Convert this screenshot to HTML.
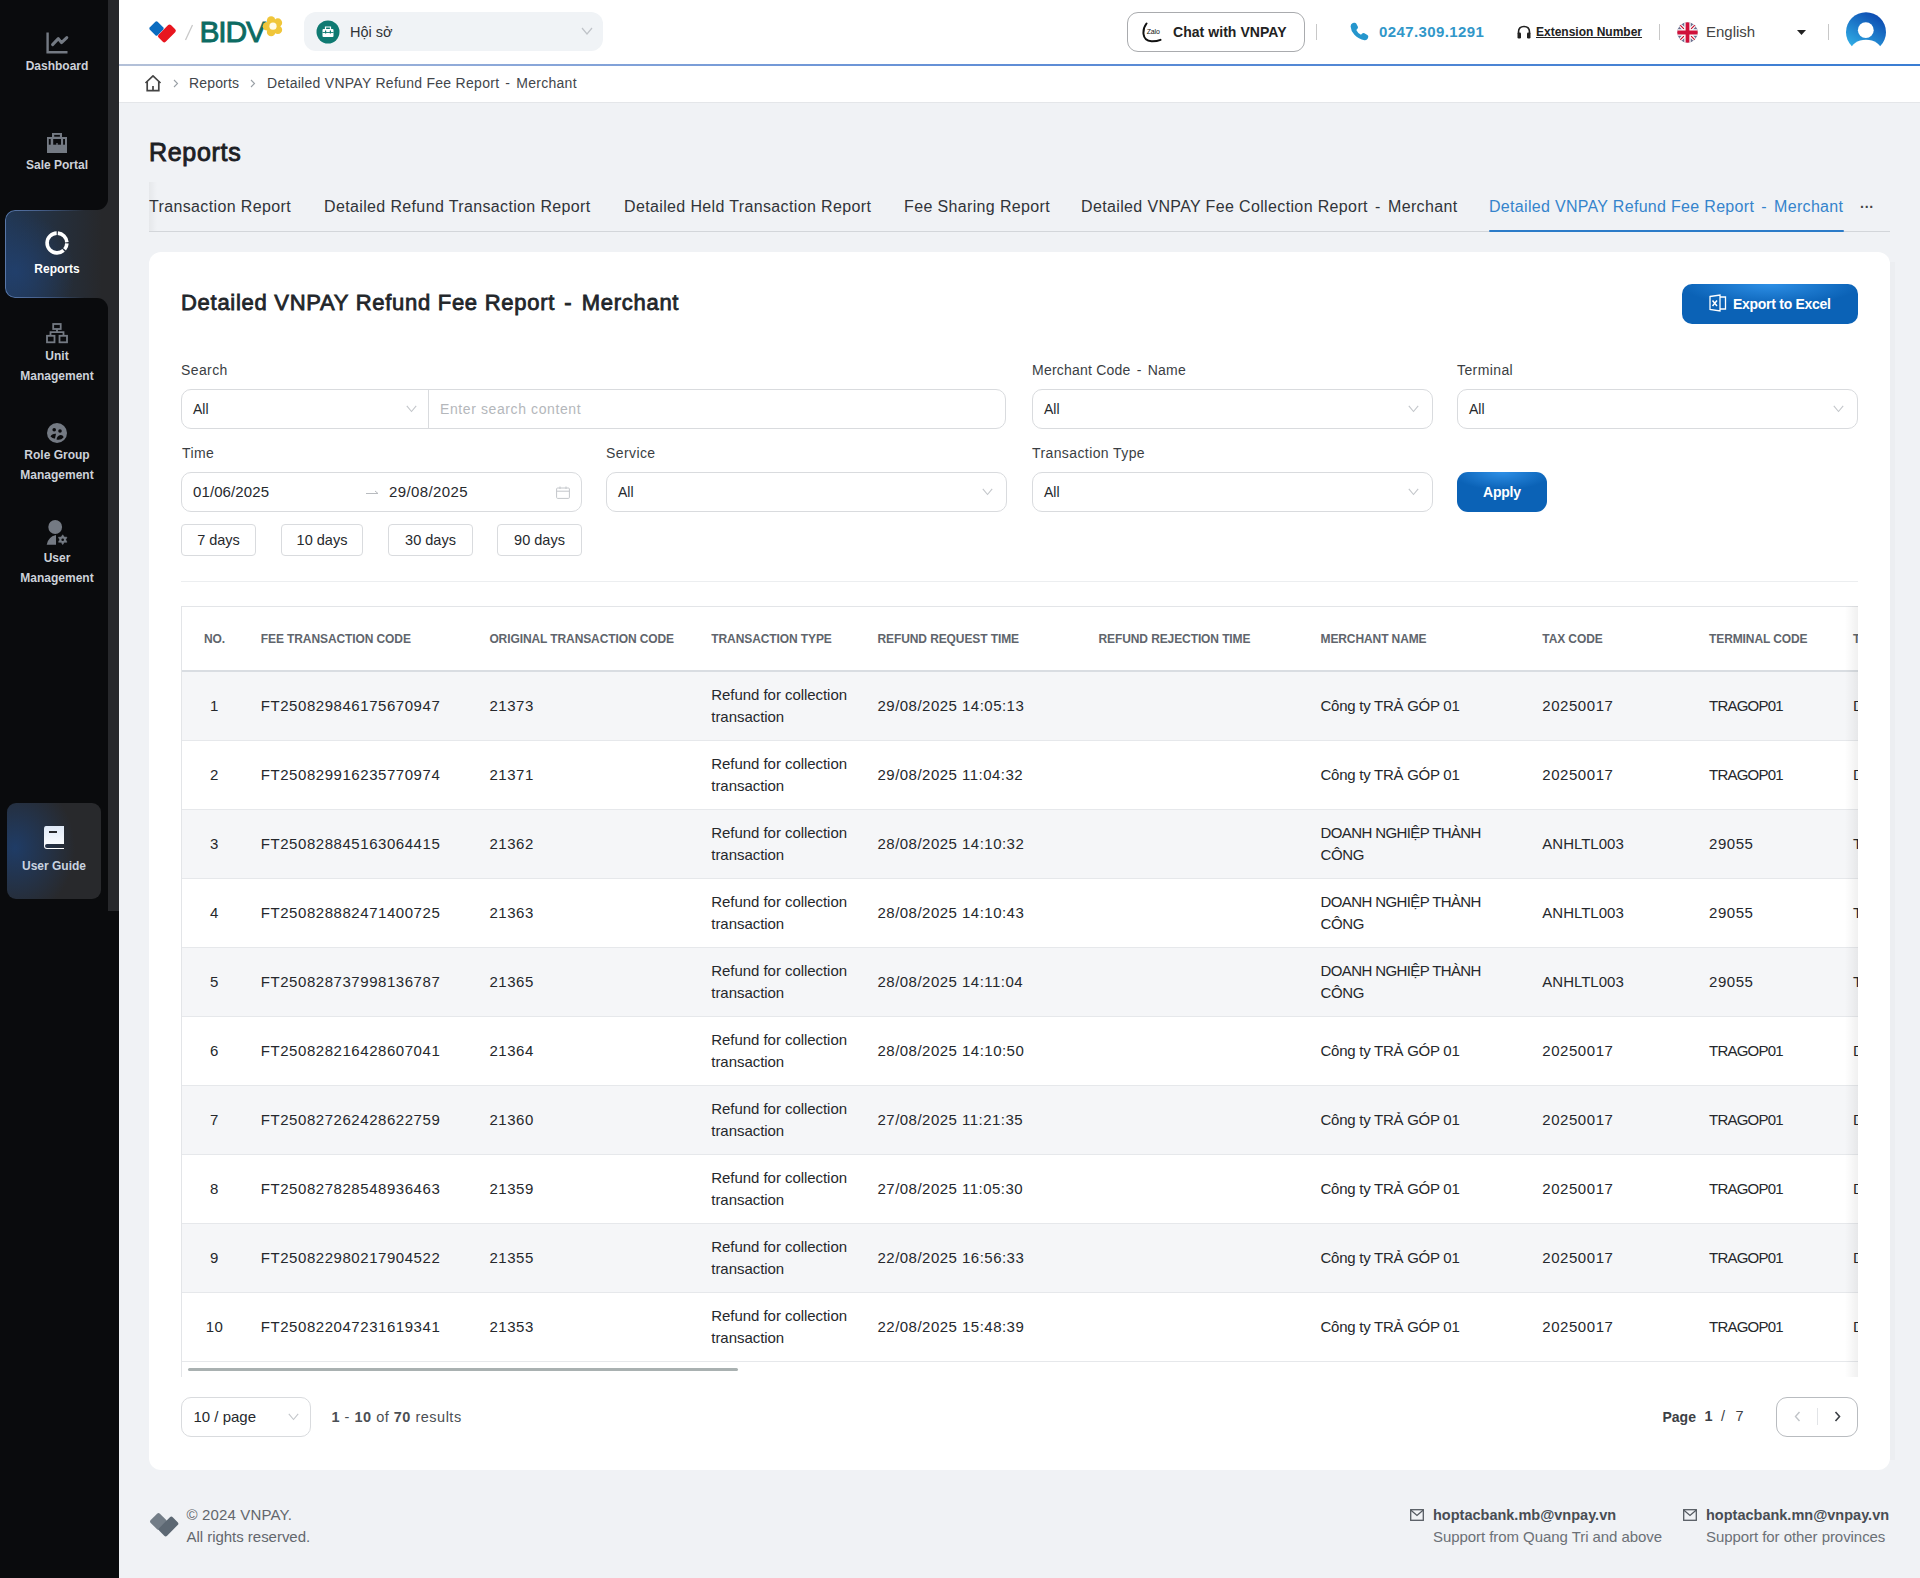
<!DOCTYPE html><html><head><meta charset="utf-8"><style>*{box-sizing:border-box;margin:0;padding:0}
html,body{width:1920px;height:1578px;overflow:hidden}
body{background:#f0f2f5;font-family:"Liberation Sans",sans-serif;color:#212529;position:relative}
.a{position:absolute;white-space:nowrap}
</style></head><body><div class="a" style="left:0px;top:0px;width:119px;height:1578px;background:#0a0b0d"></div>
<div class="a" style="left:0px;top:0px;width:119px;height:911px;background:#27282b"></div>
<div class="a" style="left:0px;top:0px;width:108px;height:210px;background:#0a0b0d;border-bottom-right-radius:11px"></div>
<div class="a" style="left:0px;top:200px;width:40px;height:110px;background:#0a0b0d"></div>
<div class="a" style="left:0px;top:298px;width:108px;height:613px;background:#0a0b0d;border-top-right-radius:11px"></div>
<div class="a" style="left:5px;top:210px;width:114px;height:88px;border-radius:10px 0 0 10px;background:radial-gradient(ellipse 60px 60px at 10px 62px,rgba(33,64,110,0.9) 0%,rgba(39,40,43,0) 100%),linear-gradient(90deg,#213754 0%,#252e3a 50%,#27282b 85%)"></div>
<div class="a" style="left:5px;top:210px;width:114px;height:88px;border-radius:10px 0 0 10px;padding:1px;background:linear-gradient(90deg,#5877a8 0%,#47608c 30%,rgba(39,40,43,0) 70%);-webkit-mask:linear-gradient(#000 0 0) content-box,linear-gradient(#000 0 0);-webkit-mask-composite:xor;mask-composite:exclude"></div>
<div class="a" style="left:7px;top:803px;width:94px;height:96px;border-radius:9px;background:radial-gradient(ellipse 60px 70px at 8px 45px,#1f3c66 0%,rgba(40,41,44,0) 100%),#28292c"></div>
<div class="a" style="left:0px;top:55.84px;font-size:12px;line-height:20px;color:#cdd1d9;font-weight:bold;width:114px;text-align:center;">Dashboard</div>
<div class="a" style="left:0px;top:154.84px;font-size:12px;line-height:20px;color:#cdd1d9;font-weight:bold;width:114px;text-align:center;">Sale Portal</div>
<div class="a" style="left:0px;top:258.84px;font-size:12px;line-height:20px;color:#ffffff;font-weight:bold;width:114px;text-align:center;">Reports</div>
<div class="a" style="left:0px;top:345.84px;font-size:12px;line-height:20px;color:#cdd1d9;font-weight:bold;width:114px;text-align:center;">Unit</div>
<div class="a" style="left:0px;top:365.84px;font-size:12px;line-height:20px;color:#cdd1d9;font-weight:bold;width:114px;text-align:center;">Management</div>
<div class="a" style="left:0px;top:444.84px;font-size:12px;line-height:20px;color:#cdd1d9;font-weight:bold;width:114px;text-align:center;">Role Group</div>
<div class="a" style="left:0px;top:464.84px;font-size:12px;line-height:20px;color:#cdd1d9;font-weight:bold;width:114px;text-align:center;">Management</div>
<div class="a" style="left:0px;top:547.84px;font-size:12px;line-height:20px;color:#cdd1d9;font-weight:bold;width:114px;text-align:center;">User</div>
<div class="a" style="left:0px;top:567.84px;font-size:12px;line-height:20px;color:#cdd1d9;font-weight:bold;width:114px;text-align:center;">Management</div>
<div class="a" style="left:7px;top:855.84px;font-size:12px;line-height:20px;color:#c9d3e0;font-weight:bold;width:94px;text-align:center;">User Guide</div>
<svg class="a" style="left:46px;top:32px;" width="23" height="23" viewBox="0 0 23 23"><path d="M1.6 0.4V20.3H21.5" stroke="#747a83" stroke-width="2.4" fill="none"/><path d="M6.6 12.6L12.3 6.6L15.5 10.6L20.8 5.6" stroke="#747a83" stroke-width="3" fill="none" stroke-linejoin="round" stroke-linecap="round"/></svg>
<svg class="a" style="left:47px;top:133px;" width="20" height="20" viewBox="0 0 20 20"><path d="M5 0H15V4.1H20V20H0V4.1H5Z" fill="#747a83"/><g fill="#0a0b0d"><rect x="7.2" y="1.9" width="5.7" height="1.8"/><rect x="1.8" y="6" width="1.9" height="5.7"/><rect x="6.2" y="6" width="7.8" height="5.7"/><rect x="16.1" y="6" width="1.9" height="5.7"/></g><rect x="9.2" y="10.2" width="1.6" height="1.6" fill="#747a83"/></svg>
<svg class="a" style="left:45px;top:231px;" width="24" height="24" viewBox="0 0 24 24"><circle cx="12" cy="12" r="9.9" stroke="#fff" stroke-width="3.6" fill="none" stroke-dasharray="6.57 1.38 37.7 1.21 13.8 1.56" transform="rotate(2 12 12)"/></svg>
<svg class="a" style="left:46px;top:323px;" width="22" height="21" viewBox="0 0 22 21"><rect x="7.2" y="1" width="7.5" height="5" stroke="#747a83" stroke-width="1.8" fill="none"/><path d="M11 6V9M4.5 12V9.2H17.5V12" stroke="#747a83" stroke-width="1.8" fill="none"/><rect x="1" y="12.8" width="7.5" height="6.5" stroke="#747a83" stroke-width="1.8" fill="none"/><rect x="13.5" y="12.8" width="7.5" height="6.5" stroke="#747a83" stroke-width="1.8" fill="none"/></svg>
<svg class="a" style="left:47px;top:423px;" width="20" height="20" viewBox="0 0 20 20"><circle cx="10" cy="10" r="10" fill="#747a83"/><circle cx="7.2" cy="6.7" r="1.8" fill="#0a0b0d"/><circle cx="13" cy="8" r="1.8" fill="#0a0b0d"/><path d="M3.5 13.5Q5 10.5 9 10.8L8 15.5Q6 16 3.5 13.5Z" fill="#0a0b0d"/><path d="M9.5 16.5Q10 12.5 13.5 12Q16.5 12.3 16.5 14.5Q14 17.5 9.5 16.5Z" fill="#0a0b0d"/></svg>
<svg class="a" style="left:46px;top:520px;" width="22" height="25" viewBox="0 0 22 25"><circle cx="9.2" cy="7" r="6.9" fill="#747a83"/><path d="M0.7 24.8Q1.8 17 10 15V24.8Z" fill="#747a83"/><polygon points="16.70,14.80 18.20,17.10 20.94,17.25 19.70,19.70 20.94,22.15 18.20,22.30 16.70,24.60 15.20,22.30 12.46,22.15 13.70,19.70 12.46,17.25 15.20,17.10" fill="#747a83" stroke="#747a83" stroke-width="0.6" stroke-linejoin="round"/><circle cx="16.7" cy="19.7" r="1.3" fill="#0a0b0d"/></svg>
<svg class="a" style="left:43px;top:825px;" width="22" height="24" viewBox="0 0 22 24"><defs><linearGradient id="bk" x1="0" y1="0" x2="0" y2="1"><stop offset="0" stop-color="#dfe9f7"/><stop offset="1" stop-color="#ffffff"/></linearGradient></defs><path d="M3 1H21V19H4Q2 19 2 21Q2 23 4 23H21V24H4Q1 24 1 21V4Q1 1 3 1Z" fill="url(#bk)"/><rect x="6" y="6" width="8" height="2" fill="#28292c"/></svg>
<div class="a" style="left:119px;top:0px;width:1801px;height:64px;background:#fff"></div>
<div class="a" style="left:119px;top:64px;width:1801px;height:2px;background:linear-gradient(90deg,#b4c1d8 0%,#8aa7d9 22%,#5f8dd6 50%,#3a7dd3 100%)"></div>
<div class="a" style="left:119px;top:66px;width:1801px;height:37px;background:#fff;border-bottom:1px solid #e4e6e9"></div>
<svg class="a" style="left:146px;top:18px;" width="34" height="27" viewBox="0 0 34 27"><rect x="5" y="5" width="11" height="11" rx="1.6" fill="#0b6cc0" transform="rotate(45 10.5 10.5)"/><rect x="12.15" y="10.4" width="17.5" height="10" rx="2" fill="#e8161f" transform="rotate(-45 20.9 15.4)"/></svg>
<svg class="a" style="left:184px;top:24px;" width="10" height="17" viewBox="0 0 10 17"><path d="M8.5 1L1.5 16" stroke="#c9c9c9" stroke-width="1.3"/></svg>
<div class="a" style="left:199.5px;top:16.61px;font-size:30px;line-height:30px;color:#0d6b63;letter-spacing:-1.2px;-webkit-text-stroke:0.9px #0d6b63">BIDV</div>
<svg class="a" style="left:262px;top:15px;" width="23" height="23" viewBox="0 0 23 23"><g fill="#f0c63a"><circle cx="5.00" cy="11.20" r="4.3"/><circle cx="9.15" cy="5.49" r="4.3"/><circle cx="15.85" cy="7.67" r="4.3"/><circle cx="15.85" cy="14.73" r="4.3"/><circle cx="9.15" cy="16.91" r="4.3"/></g><circle cx="11" cy="11.2" r="3.6" fill="#fffbe8"/></svg>
<div class="a" style="left:304px;top:12px;width:299px;height:39px;background:#f0f3f6;border-radius:12px"></div>
<svg class="a" style="left:316px;top:20px;" width="24" height="24" viewBox="0 0 24 24"><circle cx="12" cy="12" r="11.5" fill="#0f7a72"/><rect x="6.5" y="9" width="11" height="8" rx="1" fill="#fff"/><path d="M9.5 9V7H14.5V9" stroke="#fff" stroke-width="1.2" fill="none"/><path d="M6.5 12.5H17.5" stroke="#0f7a72" stroke-width="0.9"/><rect x="9" y="10.5" width="1.2" height="3" fill="#0f7a72"/><rect x="13.8" y="10.5" width="1.2" height="3" fill="#0f7a72"/></svg>
<div class="a" style="left:350px;top:21.98px;font-size:14.5px;line-height:20px;color:#303336;">Hội sở</div>
<svg class="a" style="left:581px;top:27px;" width="12" height="9" viewBox="0 0 12 9"><path d="M1 1L6 7L11 1" stroke="#bfc3c8" stroke-width="1.2" fill="none"/></svg>
<div class="a" style="left:1127px;top:12px;width:178px;height:40px;border:1px solid #a9abae;border-radius:11px;background:#fff"></div>
<svg class="a" style="left:1142px;top:22px;" width="22" height="21" viewBox="0 0 22 21"><path d="M4.5 1.5Q1 6 1.5 12Q2.3 18.8 9.5 19.3Q14.5 19.5 18.5 17.8" stroke="#111" stroke-width="2" fill="none" stroke-linecap="round"/><text x="4.8" y="11.8" font-family="Liberation Sans" font-size="7" fill="#111" letter-spacing="-0.2">Zalo</text></svg>
<div class="a" style="left:1173px;top:22.15px;font-size:14px;line-height:20px;color:#222;font-weight:bold;letter-spacing:0.05px;">Chat with VNPAY</div>
<div class="a" style="left:1316px;top:24px;width:1px;height:16px;background:#c8c8c8"></div>
<svg class="a" style="left:1350px;top:22px;" width="19" height="19" viewBox="0 0 19 19"><path d="M3.8 0.8Q5.5 0.3 6.2 1.6L7.8 4.6Q8.4 5.8 7.4 6.8L6.3 7.9Q7.6 10.9 11 12.7L12.2 11.6Q13.2 10.6 14.4 11.3L17.4 13Q18.7 13.8 18.2 15.3L17.6 16.8Q16.8 18.4 14.6 18.2Q8.5 17.2 4.4 12.8Q0.8 8.8 0.6 4.5Q0.6 2 2.4 1.3Z" fill="#2596cd"/></svg>
<div class="a" style="left:1379px;top:21.80px;font-size:15px;line-height:20px;color:#3197c9;font-weight:bold;letter-spacing:0.4px;">0247.309.1291</div>
<svg class="a" style="left:1517px;top:25px;" width="14" height="14" viewBox="0 0 14 14"><path d="M1.5 9V7Q1.5 1.5 7 1.5Q12.5 1.5 12.5 7V9" stroke="#222" stroke-width="1.6" fill="none"/><rect x="0.5" y="7.5" width="3.5" height="6" rx="1.2" fill="#222"/><rect x="10" y="7.5" width="3.5" height="6" rx="1.2" fill="#222"/></svg>
<div class="a" style="left:1536px;top:24.14px;font-size:12px;line-height:16px;color:#222;font-weight:bold;text-decoration:underline;text-underline-offset:1px">Extension Number</div>
<div class="a" style="left:1659px;top:24px;width:1px;height:16px;background:#c8c8c8"></div>
<svg class="a" style="left:1677px;top:22px;" width="21" height="21" viewBox="0 0 21 21"><defs><clipPath id="fc"><circle cx="10.5" cy="10.5" r="10.2"/></clipPath></defs><g clip-path="url(#fc)"><rect width="21" height="21" fill="#6d7190"/><path d="M0 0L21 21M21 0L0 21" stroke="#fff" stroke-width="3.4"/><path d="M0 0L21 21M21 0L0 21" stroke="#c8102e" stroke-width="1.2"/><path d="M10.5 0V21M0 10.5H21" stroke="#fff" stroke-width="6.4"/><path d="M10.5 0V21M0 10.5H21" stroke="#d0103a" stroke-width="3.8"/></g></svg>
<div class="a" style="left:1706px;top:21.80px;font-size:15px;line-height:20px;color:#444;">English</div>
<svg class="a" style="left:1797px;top:30px;" width="9" height="5" viewBox="0 0 9 5"><path d="M0 0H9L4.5 5Z" fill="#222"/></svg>
<div class="a" style="left:1828px;top:24px;width:1px;height:16px;background:#c8c8c8"></div>
<svg class="a" style="left:1846px;top:11px;" width="40" height="40" viewBox="0 0 40 40"><defs><linearGradient id="av" x1="0.8" y1="0" x2="0.2" y2="1"><stop offset="0" stop-color="#0a44ad"/><stop offset="1" stop-color="#33b6ea"/></linearGradient><mask id="am"><rect width="40" height="40" fill="#fff"/><circle cx="19.8" cy="19.2" r="7.9" fill="#000"/><ellipse cx="20" cy="39.7" rx="15.5" ry="11" fill="#000"/></mask></defs><circle cx="20" cy="21.2" r="20" fill="url(#av)" mask="url(#am)"/></svg>
<svg class="a" style="left:144px;top:74px;" width="18" height="18" viewBox="0 0 18 18"><path d="M1.5 9L9 1.8L16.5 9" stroke="#444" stroke-width="1.7" fill="none" stroke-linejoin="round"/><path d="M3.2 7.5V16.6H14.8V7.5" stroke="#444" stroke-width="1.7" fill="none"/><path d="M9 12V16.6" stroke="#444" stroke-width="1.7"/></svg>
<svg class="a" style="left:173px;top:79px;" width="6" height="9" viewBox="0 0 6 9"><path d="M1 1L4.5 4.5L1 8" stroke="#9aa0a6" stroke-width="1.1" fill="none"/></svg>
<div class="a" style="left:189px;top:74.15px;font-size:14px;line-height:18px;color:#42464b;letter-spacing:0.15px;">Reports</div>
<svg class="a" style="left:250px;top:79px;" width="6" height="9" viewBox="0 0 6 9"><path d="M1 1L4.5 4.5L1 8" stroke="#9aa0a6" stroke-width="1.1" fill="none"/></svg>
<div class="a" style="left:267px;top:74.15px;font-size:14px;line-height:18px;color:#42464b;letter-spacing:0.28px;">Detailed VNPAY Refund Fee Report <span style="margin:0 1.8px">-</span> Merchant</div>
<div class="a" style="left:149px;top:137.34px;font-size:25px;line-height:30px;color:#1c2024;letter-spacing:0.7px;-webkit-text-stroke:0.9px #1c2024">Reports</div>
<div class="a" style="left:149px;top:231px;width:1741px;height:1px;background:#d3d6da"></div>
<div class="a" style="left:149px;top:196.46px;font-size:16px;line-height:22px;color:#303439;letter-spacing:0.36px;">Transaction Report</div>
<div class="a" style="left:324px;top:196.46px;font-size:16px;line-height:22px;color:#303439;letter-spacing:0.36px;">Detailed Refund Transaction Report</div>
<div class="a" style="left:624px;top:196.46px;font-size:16px;line-height:22px;color:#303439;letter-spacing:0.36px;">Detailed Held Transaction Report</div>
<div class="a" style="left:904px;top:196.46px;font-size:16px;line-height:22px;color:#303439;letter-spacing:0.36px;">Fee Sharing Report</div>
<div class="a" style="left:1081px;top:196.46px;font-size:16px;line-height:22px;color:#303439;letter-spacing:0.36px;">Detailed VNPAY Fee Collection Report <span style="margin:0 2.4px">-</span> Merchant</div>
<div class="a" style="left:1489px;top:196.46px;font-size:16px;line-height:22px;color:#3584cc;letter-spacing:0.31px;">Detailed VNPAY Refund Fee Report <span style="margin:0 2.4px">-</span> Merchant</div>
<div class="a" style="left:1489px;top:230px;width:355px;height:2px;background:#2b7bc8;border-radius:1px"></div>
<div class="a" style="left:1860px;top:197.15px;font-size:14px;line-height:20px;color:#444;font-weight:bold;">···</div>
<div class="a" style="left:149px;top:182px;width:8px;height:49px;background:linear-gradient(90deg,rgba(0,0,0,0.045),rgba(0,0,0,0))"></div>
<div class="a" style="left:1890px;top:262px;width:5px;height:1198px;background:#eceef1"></div>
<div class="a" style="left:149px;top:252px;width:1741px;height:1218px;background:#fff;border-radius:12px"></div>
<div class="a" style="left:181px;top:289.38px;font-size:22px;line-height:28px;color:#22262a;letter-spacing:0.72px;-webkit-text-stroke:0.8px #22262a">Detailed VNPAY Refund Fee Report <span style="margin:0 2.5px">-</span> Merchant</div>
<div class="a" style="left:1682px;top:284px;width:176px;height:40px;border-radius:10px;background:radial-gradient(ellipse 90px 22px at 50% 0%,#2d8fe6 0%,rgba(13,100,186,0) 100%),#0b62b6"></div>
<svg class="a" style="left:1709px;top:294px;" width="18" height="18" viewBox="0 0 18 18"><path d="M1 2.5L11 1V17L1 15.5Z" stroke="#fff" stroke-width="1.3" fill="none"/><path d="M11 3H16.5V15H11" stroke="#fff" stroke-width="1.3" fill="none"/><path d="M3.5 6.5L8 12M8 6.5L3.5 12" stroke="#fff" stroke-width="1.5"/></svg>
<div class="a" style="left:1733px;top:294.15px;font-size:14px;line-height:20px;color:#fff;font-weight:bold;letter-spacing:-0.28px;">Export to Excel</div>
<div class="a" style="left:181px;top:361.15px;font-size:14px;line-height:18px;color:#3a3e43;letter-spacing:0.4px;">Search</div>
<div class="a" style="left:181px;top:389px;width:825px;height:40px;border:1px solid #d9dbde;border-radius:10px;background:#fff"></div>
<div class="a" style="left:428px;top:389px;width:1px;height:40px;background:#d9dbde"></div>
<div class="a" style="left:193px;top:400.15px;font-size:14px;line-height:18px;color:#26292d;">All</div>
<svg class="a" style="left:406px;top:405px;" width="11" height="8" viewBox="0 0 11 8"><path d="M0.8 0.8L5.5 6.5L10.2 0.8" stroke="#c3c6ca" stroke-width="1.1" fill="none"/></svg>
<div class="a" style="left:440px;top:400.15px;font-size:14px;line-height:18px;color:#b4b7bb;letter-spacing:0.6px;">Enter search content</div>
<div class="a" style="left:1032px;top:361.15px;font-size:14px;line-height:18px;color:#3a3e43;letter-spacing:0.22px;">Merchant Code <span style="margin:0 2px">-</span> Name</div>
<div class="a" style="left:1032px;top:389px;width:401px;height:40px;border:1px solid #d9dbde;border-radius:10px;background:#fff"></div>
<div class="a" style="left:1044px;top:400.15px;font-size:14px;line-height:18px;color:#26292d;">All</div>
<svg class="a" style="left:1408px;top:405px;" width="11" height="8" viewBox="0 0 11 8"><path d="M0.8 0.8L5.5 6.5L10.2 0.8" stroke="#c3c6ca" stroke-width="1.1" fill="none"/></svg>
<div class="a" style="left:1457px;top:361.15px;font-size:14px;line-height:18px;color:#3a3e43;letter-spacing:0.4px;">Terminal</div>
<div class="a" style="left:1457px;top:389px;width:401px;height:40px;border:1px solid #d9dbde;border-radius:10px;background:#fff"></div>
<div class="a" style="left:1469px;top:400.15px;font-size:14px;line-height:18px;color:#26292d;">All</div>
<svg class="a" style="left:1833px;top:405px;" width="11" height="8" viewBox="0 0 11 8"><path d="M0.8 0.8L5.5 6.5L10.2 0.8" stroke="#c3c6ca" stroke-width="1.1" fill="none"/></svg>
<div class="a" style="left:182px;top:444.15px;font-size:14px;line-height:18px;color:#3a3e43;letter-spacing:0.4px;">Time</div>
<div class="a" style="left:181px;top:472px;width:401px;height:40px;border:1px solid #d9dbde;border-radius:10px;background:#fff"></div>
<div class="a" style="left:193px;top:482.80px;font-size:15px;line-height:18px;color:#26292d;letter-spacing:0.1px;">01/06/2025</div>
<svg class="a" style="left:366px;top:489px;" width="13" height="7" viewBox="0 0 13 7"><path d="M0 4.5H12M9 2L12 4.5" stroke="#b8bbbf" stroke-width="1" fill="none"/></svg>
<div class="a" style="left:389px;top:482.80px;font-size:15px;line-height:18px;color:#26292d;letter-spacing:0.38px;">29/08/2025</div>
<svg class="a" style="left:556px;top:486px;" width="14" height="13" viewBox="0 0 14 13"><rect x="0.6" y="2" width="12.8" height="10.4" rx="1" stroke="#c3c6ca" stroke-width="1" fill="none"/><path d="M0.6 5.2H13.4M4 0.5V3M10 0.5V3" stroke="#c3c6ca" stroke-width="1"/></svg>
<div class="a" style="left:606px;top:444.15px;font-size:14px;line-height:18px;color:#3a3e43;letter-spacing:0.4px;">Service</div>
<div class="a" style="left:606px;top:472px;width:401px;height:40px;border:1px solid #d9dbde;border-radius:10px;background:#fff"></div>
<div class="a" style="left:618px;top:483.15px;font-size:14px;line-height:18px;color:#26292d;">All</div>
<svg class="a" style="left:982px;top:488px;" width="11" height="8" viewBox="0 0 11 8"><path d="M0.8 0.8L5.5 6.5L10.2 0.8" stroke="#c3c6ca" stroke-width="1.1" fill="none"/></svg>
<div class="a" style="left:1032px;top:444.15px;font-size:14px;line-height:18px;color:#3a3e43;letter-spacing:0.4px;">Transaction Type</div>
<div class="a" style="left:1032px;top:472px;width:401px;height:40px;border:1px solid #d9dbde;border-radius:10px;background:#fff"></div>
<div class="a" style="left:1044px;top:483.15px;font-size:14px;line-height:18px;color:#26292d;">All</div>
<svg class="a" style="left:1408px;top:488px;" width="11" height="8" viewBox="0 0 11 8"><path d="M0.8 0.8L5.5 6.5L10.2 0.8" stroke="#c3c6ca" stroke-width="1.1" fill="none"/></svg>
<div class="a" style="left:1457px;top:472px;width:90px;height:40px;border-radius:11px;background:radial-gradient(ellipse 50px 18px at 50% 0%,#2d8fe6 0%,rgba(13,100,186,0) 100%),#0b62b6"></div>
<div class="a" style="left:1483px;top:483.15px;font-size:14px;line-height:18px;color:#fff;font-weight:bold;letter-spacing:-0.2px;">Apply</div>
<div class="a" style="left:181px;top:524px;width:75px;height:32px;border:1px solid #d9dbde;border-radius:4px;background:#fff"></div>
<div class="a" style="left:181px;top:530.98px;font-size:14.5px;line-height:18px;color:#26292d;width:75px;text-align:center;">7 days</div>
<div class="a" style="left:281px;top:524px;width:82px;height:32px;border:1px solid #d9dbde;border-radius:4px;background:#fff"></div>
<div class="a" style="left:281px;top:530.98px;font-size:14.5px;line-height:18px;color:#26292d;width:82px;text-align:center;">10 days</div>
<div class="a" style="left:388px;top:524px;width:85px;height:32px;border:1px solid #d9dbde;border-radius:4px;background:#fff"></div>
<div class="a" style="left:388px;top:530.98px;font-size:14.5px;line-height:18px;color:#26292d;width:85px;text-align:center;">30 days</div>
<div class="a" style="left:497px;top:524px;width:85px;height:32px;border:1px solid #d9dbde;border-radius:4px;background:#fff"></div>
<div class="a" style="left:497px;top:530.98px;font-size:14.5px;line-height:18px;color:#26292d;width:85px;text-align:center;">90 days</div>
<div class="a" style="left:181px;top:581px;width:1677px;height:1px;background:#eceef0"></div>
<div class="a" style="left:181px;top:606px;width:1677px;height:771px;overflow:hidden">
<div class="a" style="left:0px;top:0px;width:1677px;height:1px;background:#e3e5e8"></div>
<div class="a" style="left:0px;top:0px;width:1px;height:771px;background:#e3e5e8"></div>
<div class="a" style="left:1px;top:64px;width:1676px;height:2px;background:#d9dde2"></div>
<div class="a" style="left:79.8px;top:25.14px;font-size:12px;line-height:16px;color:#60656c;font-weight:bold;letter-spacing:-0.1px;">FEE TRANSACTION CODE</div>
<div class="a" style="left:308.4px;top:25.14px;font-size:12px;line-height:16px;color:#60656c;font-weight:bold;letter-spacing:-0.1px;">ORIGINAL TRANSACTION CODE</div>
<div class="a" style="left:530.3px;top:25.14px;font-size:12px;line-height:16px;color:#60656c;font-weight:bold;letter-spacing:-0.1px;">TRANSACTION TYPE</div>
<div class="a" style="left:696.5px;top:25.14px;font-size:12px;line-height:16px;color:#60656c;font-weight:bold;letter-spacing:-0.1px;">REFUND REQUEST TIME</div>
<div class="a" style="left:917.5px;top:25.14px;font-size:12px;line-height:16px;color:#60656c;font-weight:bold;letter-spacing:-0.1px;">REFUND REJECTION TIME</div>
<div class="a" style="left:1139.5px;top:25.14px;font-size:12px;line-height:16px;color:#60656c;font-weight:bold;letter-spacing:-0.1px;">MERCHANT NAME</div>
<div class="a" style="left:1361.3px;top:25.14px;font-size:12px;line-height:16px;color:#60656c;font-weight:bold;letter-spacing:-0.1px;">TAX CODE</div>
<div class="a" style="left:1528px;top:25.14px;font-size:12px;line-height:16px;color:#60656c;font-weight:bold;letter-spacing:-0.1px;">TERMINAL CODE</div>
<div class="a" style="left:1672px;top:25.14px;font-size:12px;line-height:16px;color:#60656c;font-weight:bold;letter-spacing:-0.1px;">TERMINAL NAME</div>
<div class="a" style="left:0px;top:25.14px;font-size:12px;line-height:16px;color:#60656c;font-weight:bold;letter-spacing:-0.1px;width:67px;text-align:center;">NO.</div>
<div class="a" style="left:1px;top:66px;width:1676px;height:69px;background:#f5f6f8;border-bottom:1px solid #e6e8eb"></div>
<div class="a" style="left:0px;top:89.80px;font-size:15px;line-height:20px;color:#25282c;letter-spacing:0.5px;width:67px;text-align:center;">1</div>
<div class="a" style="left:79.80000000000001px;top:89.80px;font-size:15px;line-height:20px;color:#25282c;letter-spacing:0.55px;">FT250829846175670947</div>
<div class="a" style="left:308.4px;top:89.80px;font-size:15px;line-height:20px;color:#25282c;letter-spacing:0.55px;">21373</div>
<div class="a" style="left:530.3px;top:77.80px;font-size:15px;line-height:22px;color:#25282c;letter-spacing:-0.05px;">Refund for collection</div>
<div class="a" style="left:530.3px;top:99.80px;font-size:15px;line-height:22px;color:#25282c;letter-spacing:-0.05px;">transaction</div>
<div class="a" style="left:696.5px;top:89.80px;font-size:15px;line-height:20px;color:#25282c;letter-spacing:0.48px;">29/08/2025 14:05:13</div>
<div class="a" style="left:1139.5px;top:89.80px;font-size:15px;line-height:20px;color:#25282c;letter-spacing:-0.26px;">Công ty TRẢ GÓP 01</div>
<div class="a" style="left:1361.3px;top:89.80px;font-size:15px;line-height:20px;color:#25282c;letter-spacing:0.55px;">20250017</div>
<div class="a" style="left:1528px;top:89.80px;font-size:15px;line-height:20px;color:#25282c;letter-spacing:-0.78px;">TRAGOP01</div>
<div class="a" style="left:1672px;top:89.80px;font-size:15px;line-height:20px;color:#25282c;">DN</div>
<div class="a" style="left:1px;top:135px;width:1676px;height:69px;background:#fff;border-bottom:1px solid #e6e8eb"></div>
<div class="a" style="left:0px;top:158.80px;font-size:15px;line-height:20px;color:#25282c;letter-spacing:0.5px;width:67px;text-align:center;">2</div>
<div class="a" style="left:79.80000000000001px;top:158.80px;font-size:15px;line-height:20px;color:#25282c;letter-spacing:0.55px;">FT250829916235770974</div>
<div class="a" style="left:308.4px;top:158.80px;font-size:15px;line-height:20px;color:#25282c;letter-spacing:0.55px;">21371</div>
<div class="a" style="left:530.3px;top:146.80px;font-size:15px;line-height:22px;color:#25282c;letter-spacing:-0.05px;">Refund for collection</div>
<div class="a" style="left:530.3px;top:168.80px;font-size:15px;line-height:22px;color:#25282c;letter-spacing:-0.05px;">transaction</div>
<div class="a" style="left:696.5px;top:158.80px;font-size:15px;line-height:20px;color:#25282c;letter-spacing:0.48px;">29/08/2025 11:04:32</div>
<div class="a" style="left:1139.5px;top:158.80px;font-size:15px;line-height:20px;color:#25282c;letter-spacing:-0.26px;">Công ty TRẢ GÓP 01</div>
<div class="a" style="left:1361.3px;top:158.80px;font-size:15px;line-height:20px;color:#25282c;letter-spacing:0.55px;">20250017</div>
<div class="a" style="left:1528px;top:158.80px;font-size:15px;line-height:20px;color:#25282c;letter-spacing:-0.78px;">TRAGOP01</div>
<div class="a" style="left:1672px;top:158.80px;font-size:15px;line-height:20px;color:#25282c;">DN</div>
<div class="a" style="left:1px;top:204px;width:1676px;height:69px;background:#f5f6f8;border-bottom:1px solid #e6e8eb"></div>
<div class="a" style="left:0px;top:227.80px;font-size:15px;line-height:20px;color:#25282c;letter-spacing:0.5px;width:67px;text-align:center;">3</div>
<div class="a" style="left:79.80000000000001px;top:227.80px;font-size:15px;line-height:20px;color:#25282c;letter-spacing:0.55px;">FT250828845163064415</div>
<div class="a" style="left:308.4px;top:227.80px;font-size:15px;line-height:20px;color:#25282c;letter-spacing:0.55px;">21362</div>
<div class="a" style="left:530.3px;top:215.80px;font-size:15px;line-height:22px;color:#25282c;letter-spacing:-0.05px;">Refund for collection</div>
<div class="a" style="left:530.3px;top:237.80px;font-size:15px;line-height:22px;color:#25282c;letter-spacing:-0.05px;">transaction</div>
<div class="a" style="left:696.5px;top:227.80px;font-size:15px;line-height:20px;color:#25282c;letter-spacing:0.48px;">28/08/2025 14:10:32</div>
<div class="a" style="left:1139.5px;top:215.80px;font-size:15px;line-height:22px;color:#25282c;letter-spacing:-0.6px;">DOANH NGHIỆP THÀNH</div>
<div class="a" style="left:1139.5px;top:237.80px;font-size:15px;line-height:22px;color:#25282c;letter-spacing:-0.4px;">CÔNG</div>
<div class="a" style="left:1361.3px;top:227.80px;font-size:15px;line-height:20px;color:#25282c;">ANHLTL003</div>
<div class="a" style="left:1528px;top:227.80px;font-size:15px;line-height:20px;color:#25282c;letter-spacing:0.55px;">29055</div>
<div class="a" style="left:1672px;top:227.80px;font-size:15px;line-height:20px;color:#25282c;">TCT</div>
<div class="a" style="left:1px;top:273px;width:1676px;height:69px;background:#fff;border-bottom:1px solid #e6e8eb"></div>
<div class="a" style="left:0px;top:296.80px;font-size:15px;line-height:20px;color:#25282c;letter-spacing:0.5px;width:67px;text-align:center;">4</div>
<div class="a" style="left:79.80000000000001px;top:296.80px;font-size:15px;line-height:20px;color:#25282c;letter-spacing:0.55px;">FT250828882471400725</div>
<div class="a" style="left:308.4px;top:296.80px;font-size:15px;line-height:20px;color:#25282c;letter-spacing:0.55px;">21363</div>
<div class="a" style="left:530.3px;top:284.80px;font-size:15px;line-height:22px;color:#25282c;letter-spacing:-0.05px;">Refund for collection</div>
<div class="a" style="left:530.3px;top:306.80px;font-size:15px;line-height:22px;color:#25282c;letter-spacing:-0.05px;">transaction</div>
<div class="a" style="left:696.5px;top:296.80px;font-size:15px;line-height:20px;color:#25282c;letter-spacing:0.48px;">28/08/2025 14:10:43</div>
<div class="a" style="left:1139.5px;top:284.80px;font-size:15px;line-height:22px;color:#25282c;letter-spacing:-0.6px;">DOANH NGHIỆP THÀNH</div>
<div class="a" style="left:1139.5px;top:306.80px;font-size:15px;line-height:22px;color:#25282c;letter-spacing:-0.4px;">CÔNG</div>
<div class="a" style="left:1361.3px;top:296.80px;font-size:15px;line-height:20px;color:#25282c;">ANHLTL003</div>
<div class="a" style="left:1528px;top:296.80px;font-size:15px;line-height:20px;color:#25282c;letter-spacing:0.55px;">29055</div>
<div class="a" style="left:1672px;top:296.80px;font-size:15px;line-height:20px;color:#25282c;">TCT</div>
<div class="a" style="left:1px;top:342px;width:1676px;height:69px;background:#f5f6f8;border-bottom:1px solid #e6e8eb"></div>
<div class="a" style="left:0px;top:365.80px;font-size:15px;line-height:20px;color:#25282c;letter-spacing:0.5px;width:67px;text-align:center;">5</div>
<div class="a" style="left:79.80000000000001px;top:365.80px;font-size:15px;line-height:20px;color:#25282c;letter-spacing:0.55px;">FT250828737998136787</div>
<div class="a" style="left:308.4px;top:365.80px;font-size:15px;line-height:20px;color:#25282c;letter-spacing:0.55px;">21365</div>
<div class="a" style="left:530.3px;top:353.80px;font-size:15px;line-height:22px;color:#25282c;letter-spacing:-0.05px;">Refund for collection</div>
<div class="a" style="left:530.3px;top:375.80px;font-size:15px;line-height:22px;color:#25282c;letter-spacing:-0.05px;">transaction</div>
<div class="a" style="left:696.5px;top:365.80px;font-size:15px;line-height:20px;color:#25282c;letter-spacing:0.48px;">28/08/2025 14:11:04</div>
<div class="a" style="left:1139.5px;top:353.80px;font-size:15px;line-height:22px;color:#25282c;letter-spacing:-0.6px;">DOANH NGHIỆP THÀNH</div>
<div class="a" style="left:1139.5px;top:375.80px;font-size:15px;line-height:22px;color:#25282c;letter-spacing:-0.4px;">CÔNG</div>
<div class="a" style="left:1361.3px;top:365.80px;font-size:15px;line-height:20px;color:#25282c;">ANHLTL003</div>
<div class="a" style="left:1528px;top:365.80px;font-size:15px;line-height:20px;color:#25282c;letter-spacing:0.55px;">29055</div>
<div class="a" style="left:1672px;top:365.80px;font-size:15px;line-height:20px;color:#25282c;">TCT</div>
<div class="a" style="left:1px;top:411px;width:1676px;height:69px;background:#fff;border-bottom:1px solid #e6e8eb"></div>
<div class="a" style="left:0px;top:434.80px;font-size:15px;line-height:20px;color:#25282c;letter-spacing:0.5px;width:67px;text-align:center;">6</div>
<div class="a" style="left:79.80000000000001px;top:434.80px;font-size:15px;line-height:20px;color:#25282c;letter-spacing:0.55px;">FT250828216428607041</div>
<div class="a" style="left:308.4px;top:434.80px;font-size:15px;line-height:20px;color:#25282c;letter-spacing:0.55px;">21364</div>
<div class="a" style="left:530.3px;top:422.80px;font-size:15px;line-height:22px;color:#25282c;letter-spacing:-0.05px;">Refund for collection</div>
<div class="a" style="left:530.3px;top:444.80px;font-size:15px;line-height:22px;color:#25282c;letter-spacing:-0.05px;">transaction</div>
<div class="a" style="left:696.5px;top:434.80px;font-size:15px;line-height:20px;color:#25282c;letter-spacing:0.48px;">28/08/2025 14:10:50</div>
<div class="a" style="left:1139.5px;top:434.80px;font-size:15px;line-height:20px;color:#25282c;letter-spacing:-0.26px;">Công ty TRẢ GÓP 01</div>
<div class="a" style="left:1361.3px;top:434.80px;font-size:15px;line-height:20px;color:#25282c;letter-spacing:0.55px;">20250017</div>
<div class="a" style="left:1528px;top:434.80px;font-size:15px;line-height:20px;color:#25282c;letter-spacing:-0.78px;">TRAGOP01</div>
<div class="a" style="left:1672px;top:434.80px;font-size:15px;line-height:20px;color:#25282c;">DN</div>
<div class="a" style="left:1px;top:480px;width:1676px;height:69px;background:#f5f6f8;border-bottom:1px solid #e6e8eb"></div>
<div class="a" style="left:0px;top:503.80px;font-size:15px;line-height:20px;color:#25282c;letter-spacing:0.5px;width:67px;text-align:center;">7</div>
<div class="a" style="left:79.80000000000001px;top:503.80px;font-size:15px;line-height:20px;color:#25282c;letter-spacing:0.55px;">FT250827262428622759</div>
<div class="a" style="left:308.4px;top:503.80px;font-size:15px;line-height:20px;color:#25282c;letter-spacing:0.55px;">21360</div>
<div class="a" style="left:530.3px;top:491.80px;font-size:15px;line-height:22px;color:#25282c;letter-spacing:-0.05px;">Refund for collection</div>
<div class="a" style="left:530.3px;top:513.80px;font-size:15px;line-height:22px;color:#25282c;letter-spacing:-0.05px;">transaction</div>
<div class="a" style="left:696.5px;top:503.80px;font-size:15px;line-height:20px;color:#25282c;letter-spacing:0.48px;">27/08/2025 11:21:35</div>
<div class="a" style="left:1139.5px;top:503.80px;font-size:15px;line-height:20px;color:#25282c;letter-spacing:-0.26px;">Công ty TRẢ GÓP 01</div>
<div class="a" style="left:1361.3px;top:503.80px;font-size:15px;line-height:20px;color:#25282c;letter-spacing:0.55px;">20250017</div>
<div class="a" style="left:1528px;top:503.80px;font-size:15px;line-height:20px;color:#25282c;letter-spacing:-0.78px;">TRAGOP01</div>
<div class="a" style="left:1672px;top:503.80px;font-size:15px;line-height:20px;color:#25282c;">DN</div>
<div class="a" style="left:1px;top:549px;width:1676px;height:69px;background:#fff;border-bottom:1px solid #e6e8eb"></div>
<div class="a" style="left:0px;top:572.80px;font-size:15px;line-height:20px;color:#25282c;letter-spacing:0.5px;width:67px;text-align:center;">8</div>
<div class="a" style="left:79.80000000000001px;top:572.80px;font-size:15px;line-height:20px;color:#25282c;letter-spacing:0.55px;">FT250827828548936463</div>
<div class="a" style="left:308.4px;top:572.80px;font-size:15px;line-height:20px;color:#25282c;letter-spacing:0.55px;">21359</div>
<div class="a" style="left:530.3px;top:560.80px;font-size:15px;line-height:22px;color:#25282c;letter-spacing:-0.05px;">Refund for collection</div>
<div class="a" style="left:530.3px;top:582.80px;font-size:15px;line-height:22px;color:#25282c;letter-spacing:-0.05px;">transaction</div>
<div class="a" style="left:696.5px;top:572.80px;font-size:15px;line-height:20px;color:#25282c;letter-spacing:0.48px;">27/08/2025 11:05:30</div>
<div class="a" style="left:1139.5px;top:572.80px;font-size:15px;line-height:20px;color:#25282c;letter-spacing:-0.26px;">Công ty TRẢ GÓP 01</div>
<div class="a" style="left:1361.3px;top:572.80px;font-size:15px;line-height:20px;color:#25282c;letter-spacing:0.55px;">20250017</div>
<div class="a" style="left:1528px;top:572.80px;font-size:15px;line-height:20px;color:#25282c;letter-spacing:-0.78px;">TRAGOP01</div>
<div class="a" style="left:1672px;top:572.80px;font-size:15px;line-height:20px;color:#25282c;">DN</div>
<div class="a" style="left:1px;top:618px;width:1676px;height:69px;background:#f5f6f8;border-bottom:1px solid #e6e8eb"></div>
<div class="a" style="left:0px;top:641.80px;font-size:15px;line-height:20px;color:#25282c;letter-spacing:0.5px;width:67px;text-align:center;">9</div>
<div class="a" style="left:79.80000000000001px;top:641.80px;font-size:15px;line-height:20px;color:#25282c;letter-spacing:0.55px;">FT250822980217904522</div>
<div class="a" style="left:308.4px;top:641.80px;font-size:15px;line-height:20px;color:#25282c;letter-spacing:0.55px;">21355</div>
<div class="a" style="left:530.3px;top:629.80px;font-size:15px;line-height:22px;color:#25282c;letter-spacing:-0.05px;">Refund for collection</div>
<div class="a" style="left:530.3px;top:651.80px;font-size:15px;line-height:22px;color:#25282c;letter-spacing:-0.05px;">transaction</div>
<div class="a" style="left:696.5px;top:641.80px;font-size:15px;line-height:20px;color:#25282c;letter-spacing:0.48px;">22/08/2025 16:56:33</div>
<div class="a" style="left:1139.5px;top:641.80px;font-size:15px;line-height:20px;color:#25282c;letter-spacing:-0.26px;">Công ty TRẢ GÓP 01</div>
<div class="a" style="left:1361.3px;top:641.80px;font-size:15px;line-height:20px;color:#25282c;letter-spacing:0.55px;">20250017</div>
<div class="a" style="left:1528px;top:641.80px;font-size:15px;line-height:20px;color:#25282c;letter-spacing:-0.78px;">TRAGOP01</div>
<div class="a" style="left:1672px;top:641.80px;font-size:15px;line-height:20px;color:#25282c;">DN</div>
<div class="a" style="left:1px;top:687px;width:1676px;height:69px;background:#fff;border-bottom:1px solid #e6e8eb"></div>
<div class="a" style="left:0px;top:710.80px;font-size:15px;line-height:20px;color:#25282c;letter-spacing:0.5px;width:67px;text-align:center;">10</div>
<div class="a" style="left:79.80000000000001px;top:710.80px;font-size:15px;line-height:20px;color:#25282c;letter-spacing:0.55px;">FT250822047231619341</div>
<div class="a" style="left:308.4px;top:710.80px;font-size:15px;line-height:20px;color:#25282c;letter-spacing:0.55px;">21353</div>
<div class="a" style="left:530.3px;top:698.80px;font-size:15px;line-height:22px;color:#25282c;letter-spacing:-0.05px;">Refund for collection</div>
<div class="a" style="left:530.3px;top:720.80px;font-size:15px;line-height:22px;color:#25282c;letter-spacing:-0.05px;">transaction</div>
<div class="a" style="left:696.5px;top:710.80px;font-size:15px;line-height:20px;color:#25282c;letter-spacing:0.48px;">22/08/2025 15:48:39</div>
<div class="a" style="left:1139.5px;top:710.80px;font-size:15px;line-height:20px;color:#25282c;letter-spacing:-0.26px;">Công ty TRẢ GÓP 01</div>
<div class="a" style="left:1361.3px;top:710.80px;font-size:15px;line-height:20px;color:#25282c;letter-spacing:0.55px;">20250017</div>
<div class="a" style="left:1528px;top:710.80px;font-size:15px;line-height:20px;color:#25282c;letter-spacing:-0.78px;">TRAGOP01</div>
<div class="a" style="left:1672px;top:710.80px;font-size:15px;line-height:20px;color:#25282c;">DN</div>
<div class="a" style="left:1664px;top:0px;width:13px;height:771px;background:linear-gradient(90deg,rgba(0,0,0,0),rgba(0,0,0,0.06))"></div>
<div class="a" style="left:7px;top:762px;width:550px;height:3px;background:#a9b1b1;border-radius:2px"></div>
</div>
<div class="a" style="left:181px;top:1397px;width:130px;height:40px;border:1px solid #d9dbde;border-radius:10px;background:#fff"></div>
<div class="a" style="left:193.5px;top:1406.80px;font-size:15px;line-height:20px;color:#26292d;">10 / page</div>
<svg class="a" style="left:288px;top:1413px;" width="11" height="8" viewBox="0 0 11 8"><path d="M0.8 0.8L5.5 6.5L10.2 0.8" stroke="#c3c6ca" stroke-width="1.1" fill="none"/></svg>
<div class="a" style="left:331.5px;top:1406.98px;font-size:14.5px;line-height:20px;color:#4b4f54;letter-spacing:0.5px;"><b>1</b> - <b>10</b> of <b>70</b> results</div>
<div class="a" style="left:1662.5px;top:1406.65px;font-size:14px;line-height:20px;color:#3c4045;font-weight:bold;">Page</div>
<div class="a" style="left:1704.5px;top:1406.48px;font-size:14.5px;line-height:20px;color:#3c4045;font-weight:bold;">1</div>
<div class="a" style="left:1721px;top:1406.48px;font-size:14.5px;line-height:20px;color:#3c4045;">/</div>
<div class="a" style="left:1735.5px;top:1406.48px;font-size:14.5px;line-height:20px;color:#3c4045;">7</div>
<div class="a" style="left:1776px;top:1397px;width:82px;height:40px;border:1px solid #b9bcc0;border-radius:11px;background:#fff"></div>
<svg class="a" style="left:1794px;top:1411px;" width="7" height="11" viewBox="0 0 7 11"><path d="M5.5 1L1.5 5.5L5.5 10" stroke="#c1c4c8" stroke-width="1.4" fill="none"/></svg>
<div class="a" style="left:1817px;top:1408px;width:1px;height:17px;background:#e2e4e7"></div>
<svg class="a" style="left:1834px;top:1411px;" width="7" height="11" viewBox="0 0 7 11"><path d="M1.5 1L5.5 5.5L1.5 10" stroke="#3c4045" stroke-width="1.6" fill="none"/></svg>
<svg class="a" style="left:149px;top:1512px;" width="33" height="27" viewBox="0 0 33 27"><g fill="#5d6873"><rect x="3" y="3" width="13" height="13" rx="2" transform="rotate(45 9.5 9.5)" opacity="0.85"/><rect x="10" y="9" width="19" height="11" rx="2" transform="rotate(-45 19.5 14.5)"/></g></svg>
<div class="a" style="left:186.5px;top:1504.80px;font-size:15px;line-height:20px;color:#63676d;letter-spacing:0.15px;">© 2024 VNPAY.</div>
<div class="a" style="left:186.5px;top:1526.80px;font-size:15px;line-height:20px;color:#63676d;letter-spacing:-0.03px;">All rights reserved.</div>
<svg class="a" style="left:1410px;top:1509px;" width="14" height="12" viewBox="0 0 14 12"><rect x="0.7" y="0.7" width="12.6" height="10.6" stroke="#555b62" stroke-width="1.3" fill="none"/><path d="M0.7 1L7 6.5L13.3 1" stroke="#555b62" stroke-width="1.3" fill="none"/></svg>
<div class="a" style="left:1433px;top:1505.18px;font-size:14.5px;line-height:20px;color:#484d53;font-weight:bold;">hoptacbank.mb@vnpay.vn</div>
<div class="a" style="left:1433px;top:1527.10px;font-size:15px;line-height:20px;color:#6b7076;letter-spacing:-0.06px;">Support from Quang Tri and above</div>
<svg class="a" style="left:1683px;top:1509px;" width="14" height="12" viewBox="0 0 14 12"><rect x="0.7" y="0.7" width="12.6" height="10.6" stroke="#555b62" stroke-width="1.3" fill="none"/><path d="M0.7 1L7 6.5L13.3 1" stroke="#555b62" stroke-width="1.3" fill="none"/></svg>
<div class="a" style="left:1706px;top:1505.18px;font-size:14.5px;line-height:20px;color:#484d53;font-weight:bold;">hoptacbank.mn@vnpay.vn</div>
<div class="a" style="left:1706px;top:1527.10px;font-size:15px;line-height:20px;color:#6b7076;letter-spacing:-0.06px;">Support for other provinces</div></body></html>
